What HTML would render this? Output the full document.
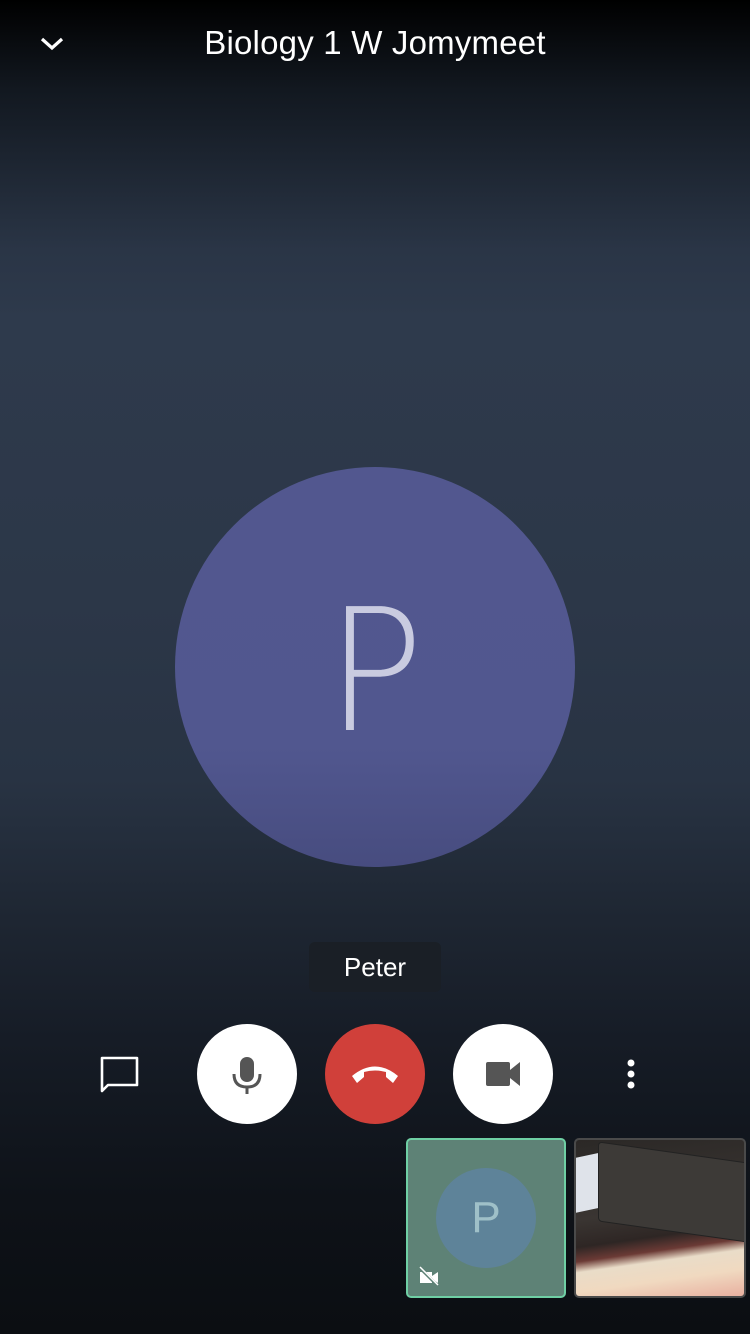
<!DOCTYPE html>
<html><head><meta charset="utf-8"><style>
*{margin:0;padding:0;box-sizing:border-box}
html,body{width:750px;height:1334px;overflow:hidden}
body{font-family:"Liberation Sans",sans-serif;position:relative;
background:linear-gradient(180deg,#000 0px,#121820 90px,#2a3546 250px,#2e3a4c 320px,#2c3748 600px,#283343 780px,#1e2632 920px,#161c26 1040px,#0e1218 1200px,#0b0e12 1334px);}
.title{position:absolute;top:24px;left:0;width:750px;text-align:center;color:#fff;font-size:33px;letter-spacing:0.2px}
.chev{position:absolute;left:40px;top:34px}
.avatar{position:absolute;left:175px;top:467px;width:400px;height:400px;border-radius:50%;background:linear-gradient(180deg,#52578f 0%,#51578f 70%,#474c7f 100%)}
.avatar span{position:absolute;left:0;top:120px;width:400px;text-align:center;color:#c9cbe0;font-size:170px;line-height:1;font-family:"DejaVu Sans","Liberation Sans",sans-serif;font-weight:100;transform:scaleX(0.95)}
.name{position:absolute;left:309px;top:942px;width:132px;height:50px;border-radius:6px;background:#1a1f26;color:#fff;font-size:26px;text-align:center;line-height:50px}
.btn{position:absolute;top:1024px;width:100px;height:100px;border-radius:50%;background:#fff}
.tile1{position:absolute;left:406px;top:1138px;width:160px;height:160px;border-radius:5px;background:#5e8276;border:2px solid #6fcfa4}
.tile1 .c{position:absolute;left:28px;top:28px;width:100px;height:100px;border-radius:50%;background:#5e8399;color:#9fc0c8;font-size:44px;text-align:center;line-height:100px;font-weight:200}
.tile2{position:absolute;left:574px;top:1138px;width:172px;height:160px;border-radius:5px;border:2px solid #4a4a4a;overflow:hidden;
background:linear-gradient(172deg,#2b2826 0%,#3a3532 45%,#2e2624 60%,#6b3a35 68%,#e9dcc8 74%,#f0d9c0 85%,#e8b0a0 100%)}
</style></head><body>
<svg class="chev" width="24" height="20" viewBox="0 0 24 20"><path d="M2 5 L12 14 L22 5" fill="none" stroke="#fff" stroke-width="3.2"/></svg>
<div class="title">Biology 1 W Jomymeet</div>
<div class="avatar"><span>P</span></div>
<div class="name">Peter</div>
<svg style="position:absolute;left:100px;top:1055px" width="40" height="40" viewBox="0 0 40 40"><path d="M2 3 H37 V30 H8 L2 36 Z" fill="none" stroke="#fff" stroke-width="2.6" stroke-linejoin="round"/></svg>
<div class="btn" style="left:197px"><svg width="100" height="100" viewBox="0 0 100 100"><rect x="43" y="33" width="14" height="25" rx="7" fill="#555"/><path d="M37 50 Q37 63 50 63 Q63 63 63 50" fill="none" stroke="#555" stroke-width="3"/><path d="M50 63 V70" stroke="#555" stroke-width="3"/></svg></div>
<div class="btn" style="left:325px;background:#d0403a"><svg width="100" height="100" viewBox="0 0 100 100"><path d="M27 52 Q50 33 73 52 L68 59 L61 53 L61 48 Q50 45 39 48 L39 53 L32 59 Z" fill="#fff"/></svg></div>
<div class="btn" style="left:453px"><svg width="100" height="100" viewBox="0 0 100 100"><rect x="33" y="38" width="24" height="24" rx="2" fill="#555"/><path d="M57 46 L67 38 V62 L57 54 Z" fill="#555"/></svg></div>
<svg style="position:absolute;left:624px;top:1058px" width="14" height="34" viewBox="0 0 14 34"><circle cx="7" cy="5" r="3.5" fill="#fff"/><circle cx="7" cy="16" r="3.5" fill="#fff"/><circle cx="7" cy="27" r="3.5" fill="#fff"/></svg>
<div class="tile1"><div class="c">P</div>
<svg style="position:absolute;left:10px;top:126px" width="22" height="22" viewBox="0 0 22 22"><rect x="2" y="6" width="12" height="11" fill="#fff"/><path d="M14 10 L20 6 V17 L14 13Z" fill="#fff"/><path d="M2 2 L20 20" stroke="#5e8276" stroke-width="3"/><path d="M2 1 L20 19" stroke="#fff" stroke-width="1.5"/></svg>
</div>
<div class="tile2">
<div style="position:absolute;left:-5px;top:14px;width:45px;height:55px;background:#dfe3ea;transform:skewY(-12deg)"></div>
<div style="position:absolute;left:22px;top:12px;width:150px;height:80px;border:1px solid #222;background:#3d3a37;transform:skewY(8deg);border-radius:4px"></div>
</div>
</body></html>
